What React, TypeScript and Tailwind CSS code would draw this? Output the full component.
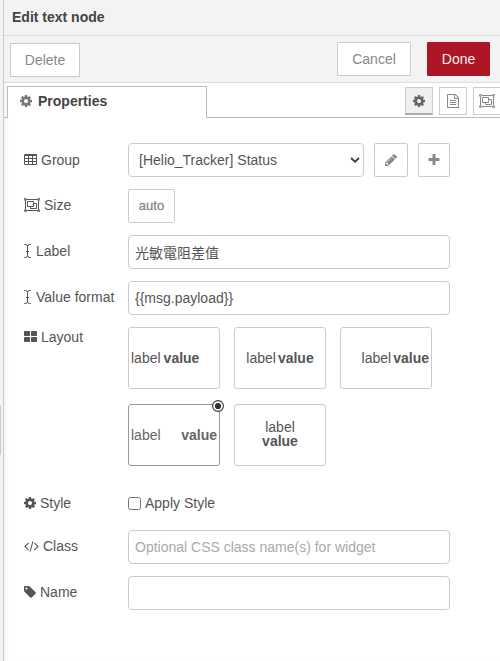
import React from "react";

type IconProps = { className?: string };

function Glyph({ box, d, className = "" }: { box: string; d: string; className?: string }) {
  return (
    <svg viewBox={box} fill="currentColor" className={`shrink-0 ${className}`}>
      <path fillRule="evenodd" d={d} />
    </svg>
  );
}

const Cog = ({ className = "" }: IconProps) => (
  <Glyph
    box="128 0 1536 1792"
    className={`h-[14px] w-3 ${className}`}
    d="M1152 896q0-106-75-181t-181-75-181 75-75 181 75 181 181 75 181-75 75-181zm512-109v222q0 12-8 23t-20 13l-185 28q-19 54-39 91 35 50 107 138 10 12 10 25t-9 23q-27 37-99 108t-94 71q-12 0-26-9l-138-108q-44 23-91 38-16 136-29 186-7 28-36 28h-222q-14 0-24.5-8.5t-11.5-21.5l-28-184q-49-16-90-37l-141 107q-10 9-25 9-14 0-25-11-126-114-165-168-7-10-7-23 0-12 8-23 15-21 51-66.5t54-70.5q-27-50-41-99l-183-27q-13-2-21-12.5t-8-23.5v-222q0-12 8-23t19-13l186-28q14-46 39-92-40-57-107-138-10-12-10-24 0-10 9-23 26-36 98.5-107.5t94.5-71.5q13 0 26 10l138 107q44-23 91-38 16-136 29-186 7-28 36-28h222q14 0 24.5 8.5t11.5 21.5l28 184q49 16 90 37l142-107q9-9 24-9 13 0 25 10 129 119 165 170 7 8 7 22 0 12-8 23-15 21-51 66.5t-54 70.5q26 50 41 98l183 28q13 2 21 12.5t8 23.5z"
  />
);

const Table = () => (
  <svg viewBox="0 0 13 11" className="mb-px h-[11px] w-[13px] shrink-0" fill="currentColor">
    <path
      fillRule="evenodd"
      d="M1.2 0h10.6A1.2 1.2 0 0 1 13 1.2v8.6a1.2 1.2 0 0 1-1.2 1.2H1.2A1.2 1.2 0 0 1 0 9.8V1.2A1.2 1.2 0 0 1 1.2 0zM1 2v2h3V2zM5 2v2h3V2zM9 2v2h3V2zM1 5v2h3V5zM5 5v2h3V5zM9 5v2h3V5zM1 8v2h3V8zM5 8v2h3V8zM9 8v2h3V8z"
    />
  </svg>
);

const ObjectGroup = () => (
  <svg viewBox="0 0 16 14" className="h-[14px] w-4 shrink-0" fill="none" stroke="currentColor" strokeWidth="1">
    <path d="M.6.6h1.6v1.6H.6zM13.8.6h1.6v1.6h-1.6zM.6 11.8h1.6v1.6H.6zM13.8 11.8h1.6v1.6h-1.6z" />
    <path d="M2.5 1.5h11M2.5 12.5h11M1.5 2.5v9M14.5 2.5v9M3.5 3.5h6v5h-6zM10 5.5h2.5v5h-6V9" />
  </svg>
);

const ICursor = () => (
  <svg viewBox="0 0 7 14" className="mr-px h-[14px] w-[7px] shrink-0" fill="none" stroke="currentColor" strokeWidth="1">
    <path d="M.2.5H1.5Q3.5.5 3.5 2.5Q3.5.5 5.5.5H6.8M3.5 2v10M.2 13.5H1.5Q3.5 13.5 3.5 11.5Q3.5 13.5 5.5 13.5H6.8M2 7.5h3" />
  </svg>
);

const ThLarge = () => (
  <svg viewBox="0 0 13 11" className="mb-px h-[11px] w-[13px] shrink-0" fill="currentColor">
    <rect x="0" y="0" width="6" height="5" rx=".7" />
    <rect x="7" y="0" width="6" height="5" rx=".7" />
    <rect x="0" y="6" width="6" height="5" rx=".7" />
    <rect x="7" y="6" width="6" height="5" rx=".7" />
  </svg>
);

const Code = () => (
  <Glyph
    box="-64 0 1920 1792"
    className="h-[14px] w-[15px]"
    d="M553 1399l-50 50q-10 10-23 10t-23-10l-466-466q-10-10-10-23t10-23l466-466q10-10 23-10t23 10l50 50q10 10 10 23t-10 23l-393 393 393 393q10 10 10 23t-10 23zm591-1067l-373 1291q-4 13-15.5 19.5t-23.5 2.5l-62-17q-13-4-19.5-15.5t-2.5-24.5l373-1291q4-13 15.5-19.5t23.5-2.5l62 17q13 4 19.5 15.5t2.5 24.5zm657 651l-466 466q-10 10-23 10t-23-10l-50-50q-10-10-10-23t10-23l393-393-393-393q-10-10-10-23t10-23l50-50q10-10 23-10t23 10l466 466q10 10 10 23t-10 23z"
  />
);

const Tag = () => (
  <Glyph
    box="128 0 1536 1792"
    className="h-[14px] w-3"
    d="M576 448q0-53-37.5-90.5t-90.5-37.5-90.5 37.5-37.5 90.5 37.5 90.5 90.5 37.5 90.5-37.5 37.5-90.5zm1067 576q0 53-37 90l-491 492q-39 37-91 37-53 0-90-37l-715-716q-38-37-64.5-101t-26.5-117v-416q0-52 38-90t90-38h416q53 0 117 26.5t102 64.5l715 714q37 39 37 91z"
  />
);

const Pencil = () => (
  <Glyph
    box="0 0 1792 1792"
    className="size-[14px]"
    d="M491 1536l91-91-235-235-91 91v107h128v128h107zm523-928q0-22-22-22-10 0-17 7l-542 542q-7 7-7 17 0 22 22 22 10 0 17-7l542-542q7-7 7-17zm-54-192l416 416-832 832h-416v-416zm683 96q0 53-37 90l-166 166-416-416 166-165q36-38 90-38 53 0 91 38l235 234q37 39 37 91z"
  />
);

const Plus = () => (
  <Glyph
    box="0 0 1792 1792"
    className="size-[14px]"
    d="M1600 736v192q0 40-28 68t-68 28h-416v416q0 40-28 68t-68 28h-192q-40 0-68-28t-28-68v-416h-416q-40 0-68-28t-28-68v-192q0-40 28-68t68-28h416v-416q0-40 28-68t68-28h192q40 0 68 28t28 68v416h416q40 0 68 28t28 68z"
  />
);

const FileText = () => (
  <Glyph
    box="128 0 1536 1792"
    className="h-[14px] w-3"
    d="M1596 380q28 28 48 76t20 88v1152q0 40-28 68t-68 28h-1344q-40 0-68-28t-28-68v-1600q0-40 28-68t68-28h896q40 0 88 20t76 48zm-444-244v376h376q-10-29-22-41l-313-313q-12-12-41-22zm384 1528v-1024h-416q-40 0-68-28t-28-68v-416h-768v1536h1280zm-1024-864q0-14 9-23t23-9h704q14 0 23 9t9 23v64q0 14-9 23t-23 9h-704q-14 0-23-9t-9-23v-64zm736 224q14 0 23 9t9 23v64q0 14-9 23t-23 9h-704q-14 0-23-9t-9-23v-64q0-14 9-23t23-9h704zm0 256q14 0 23 9t9 23v64q0 14-9 23t-23 9h-704q-14 0-23-9t-9-23v-64q0-14 9-23t23-9h704z"
  />
);

function Row({
  icon,
  label,
  height = "h-[34px]",
  children,
}: {
  icon: React.ReactNode;
  label: string;
  height?: string;
  children: React.ReactNode;
}) {
  return (
    <div className="flex items-start">
      <div className={`flex w-[104px] shrink-0 items-center gap-1 whitespace-nowrap ${height}`}>
        {icon}
        <span>{label}</span>
      </div>
      {children}
    </div>
  );
}

const field = "h-[34px] w-[322px] rounded border border-[#ccc] bg-white px-1.5 outline-none placeholder:text-[#aaa]";
const smallButton = "flex h-[34px] items-center justify-center rounded-xs border border-[#ccc] text-[#888]";

function LayoutCard({ className, selected = false }: { className: string; selected?: boolean }) {
  return (
    <div
      className={`relative flex h-[62px] w-[92px] items-center rounded-[3px] border px-0.5 leading-[14px] ${
        selected ? "border-[#999] text-[#666]" : "border-[#ccc]"
      } ${className}`}
    >
      <span>label</span>
      <b>value</b>
      {selected && (
        <svg viewBox="0 0 12 12" className="absolute -top-[5px] -right-[5px] size-3">
          <circle cx="6" cy="6" r="5.4" fill="#fff" stroke="#333" strokeWidth="1.1" />
          <circle cx="6" cy="6" r="3.1" fill="#333" />
        </svg>
      )}
    </div>
  );
}

export default function App() {
  return (
    <div className="flex h-[661px] w-[500px] overflow-hidden bg-white font-['Liberation_Sans','Noto_Sans_CJK_TC',sans-serif] text-[14px] leading-5 text-[#555]">
      <div className="flex w-1 shrink-0 items-start border-r border-[#ccc] bg-[#f3f3f3]">
        <div className="mt-[405px] h-[50px] w-px bg-[#ccc]" />
      </div>
      <div className="flex w-[496px] shrink-0 flex-col shadow-[inset_4px_0_4px_-3px_rgba(0,0,0,0.08)]">
        <header className="h-9 border-b border-[#ddd] bg-[#f3f3f3] pt-[7px] pl-2 font-bold text-[#444]">
          Edit text node
        </header>
        <div className="flex h-[47px] items-start border-b border-[#ddd] bg-[#f3f3f3] pt-1.5 pl-1.5 text-[#888]">
          <button className="mt-px h-[34px] w-[70px] border border-[#ccc] bg-white">Delete</button>
          <button className="ml-[257px] h-[34px] w-[74px] rounded-[1px] border border-[#ccc] bg-white">Cancel</button>
          <button className="ml-4 h-[34px] w-[63px] rounded-[1px] bg-[#ad1625] text-[#eee]">Done</button>
        </div>
        <div className="flex h-[35px] items-end">
          <div className="h-px w-[3px] shrink-0 bg-[#bbb]" />
          <div className="flex h-8 w-[200px] shrink-0 items-center gap-1.5 border border-b-0 border-[#bbb] bg-white pb-1 pl-3 font-bold text-[#444]">
            <Cog className="text-[#777]" />
            Properties
          </div>
          <div className="flex h-[35px] min-w-0 flex-1 items-start gap-1.5 border-b border-[#bbb] pt-1 pl-[198px] text-[#888]">
            <button className="flex h-7 w-7 shrink-0 items-center justify-center border border-b-2 border-[#ccc] border-b-[#aaa] bg-[#efefef] text-[#666]">
              <Cog />
            </button>
            <button className="flex h-7 w-7 shrink-0 items-center justify-center border border-[#ccc]">
              <FileText />
            </button>
            <button className="flex h-7 w-7 shrink-0 items-center justify-center border border-[#ccc]">
              <ObjectGroup />
            </button>
          </div>
        </div>

        <form className="flex flex-col gap-3 pt-[25px] pl-5">
          <Row icon={<Table />} label="Group">
            <div className="flex h-[34px] w-[236px] items-center justify-between rounded border border-[#ccc] pr-[3px] pl-2.5">
              <span>[Helio_Tracker] Status</span>
              <svg viewBox="0 0 10 6" className="h-1.5 w-2.5" fill="none" stroke="#444" strokeWidth="2">
                <path d="M1 1l4 3.7L9 1" />
              </svg>
            </div>
            <button type="button" className={`${smallButton} ml-2.5 w-[34px]`}>
              <Pencil />
            </button>
            <button type="button" className={`${smallButton} ml-2.5 w-8 pb-px`}>
              <Plus />
            </button>
          </Row>
          <Row icon={<ObjectGroup />} label="Size" height="h-8">
            <button type="button" className={`${smallButton} w-[47px] text-[13px] [-webkit-text-stroke:0.3px_#888]`}>
              auto
            </button>
          </Row>
          <Row icon={<ICursor />} label="Label" height="h-8">
            <input className={field} defaultValue="光敏電阻差值" />
          </Row>
          <Row icon={<ICursor />} label="Value format" height="h-8">
            <input className={field} defaultValue="{{msg.payload}}" />
          </Row>
          <Row icon={<ThLarge />} label="Layout" height="h-5">
            <div className="grid grid-cols-[92px_92px_92px] gap-x-3.5 gap-y-[15px]">
              <LayoutCard className="gap-[3px]" />
              <LayoutCard className="justify-center gap-0.5" />
              <LayoutCard className="justify-end gap-0.5" />
              <LayoutCard className="justify-between" selected />
              <LayoutCard className="flex-col justify-center pb-0.5" />
            </div>
          </Row>
          <div className="pt-[15px] pb-[5px]">
            <Row icon={<Cog />} label="Style" height="h-5">
              <label className="flex items-center gap-1">
                <input type="checkbox" className="size-[13px]" />
                Apply Style
              </label>
            </Row>
          </div>
          <Row icon={<Code />} label="Class" height="h-8">
            <input className={field} placeholder="Optional CSS class name(s) for widget" />
          </Row>
          <Row icon={<Tag />} label="Name" height="h-8">
            <input className={field} />
          </Row>
        </form>
      </div>
    </div>
  );
}
